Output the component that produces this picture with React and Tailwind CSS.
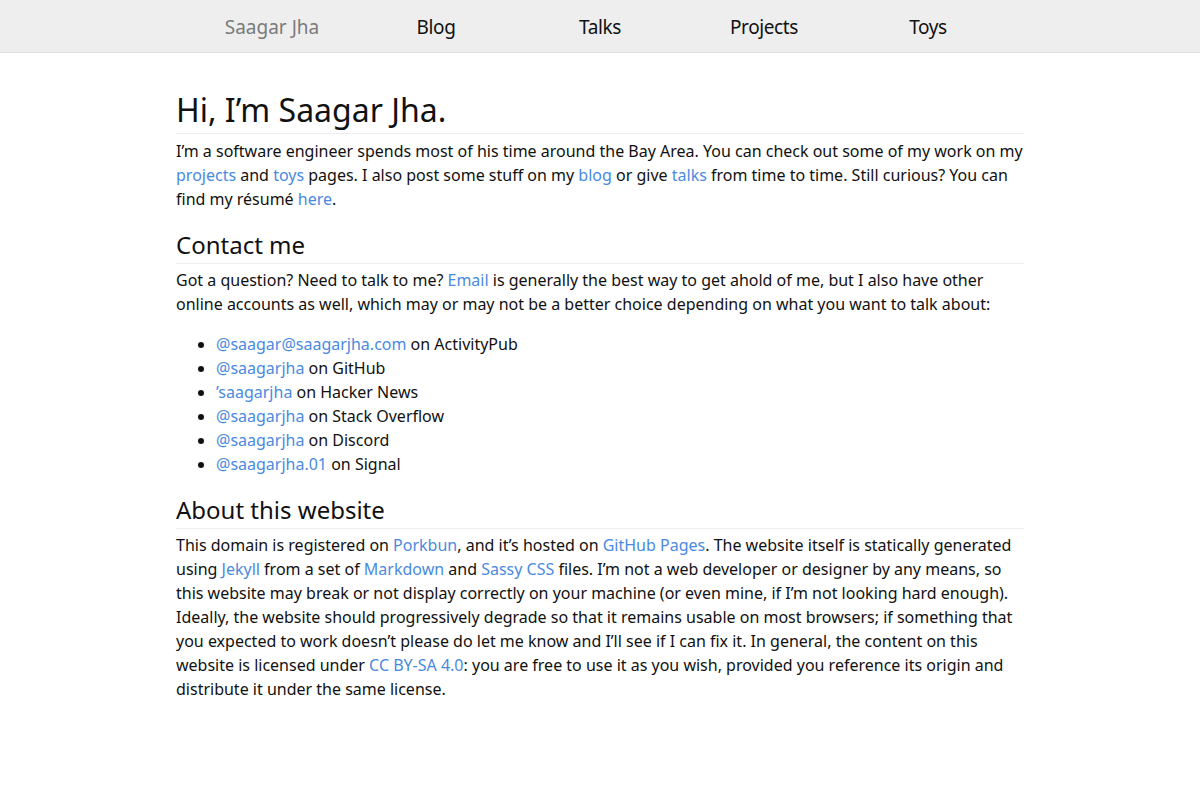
const navItems = [
  { label: "Saagar Jha", home: true },
  { label: "Blog" },
  { label: "Talks" },
  { label: "Projects" },
  { label: "Toys" },
];

const contacts = [
  { handle: "@saagar@saagarjha.com", site: "ActivityPub" },
  { handle: "@saagarjha", site: "GitHub" },
  { handle: "\u2019saagarjha", site: "Hacker News" },
  { handle: "@saagarjha", site: "Stack Overflow" },
  { handle: "@saagarjha", site: "Discord" },
  { handle: "@saagarjha.01", site: "Signal" },
];

const A = ({ children }) => (
  <a href="#" className="text-[#4a8ae0]">
    {children}
  </a>
);

export default function App() {
  return (
    <div className="min-h-screen bg-white text-[#111] font-['Noto_Sans',sans-serif]">
      {/* Top navigation */}
      <nav className="h-[53px] bg-[#eeeeee] border-b border-[#e2e2e2]">
        <ul className="mx-auto grid h-full w-[820px] grid-cols-5 items-center pt-[2px] text-[19px]">
          {navItems.map((item) => (
            <li
              key={item.label}
              className={`text-center ${
                item.home ? "text-[#7a7a7a]" : "text-[#111] tracking-[-0.02em]"
              }`}
            >
              {item.label}
            </li>
          ))}
        </ul>
      </nav>

      <main className="mx-auto w-[848px] pt-[38px] text-[16px] leading-[24px]">
        <h1 className="border-b border-[#eeeeee] pb-[4px] text-[32px] leading-[38px]">
          Hi, I’m Saagar Jha.
        </h1>
        <p className="mt-[5px]">
          I’m a software engineer spends most of his time around the Bay Area. You can check
          out some of my work on my <A>projects</A> and <A>toys</A> pages. I also post some
          stuff on my <A>blog</A> or give <A>talks</A> from time to time. Still curious? You
          can find my résumé <A>here</A>.
        </p>

        <h2 className="mt-[19px] border-b border-[#eeeeee] pb-[4px] text-[24px] leading-[29px]">
          Contact me
        </h2>
        <p className="mt-[4px]">
          Got a question? Need to talk to me? <A>Email</A> is generally the best way to get
          ahold of me, but I also have other online accounts as well, which may or may not be
          a better choice depending on what you want to talk about:
        </p>
        <ul className="mt-[16px] list-disc pl-[40px]">
          {contacts.map((c) => (
            <li key={c.site}>
              <A>{c.handle}</A> on {c.site}
            </li>
          ))}
        </ul>

        <h2 className="mt-[19px] border-b border-[#eeeeee] pb-[4px] text-[24px] leading-[29px]">
          About this website
        </h2>
        <p className="mt-[4px]">
          This domain is registered on <A>Porkbun</A>, and it’s hosted on <A>GitHub Pages</A>.
          The website itself is statically generated using <A>Jekyll</A> from a set of{" "}
          <A>Markdown</A> and <A>Sassy CSS</A> files. I’m not a web developer or designer by
          any means, so this website may break or not display correctly on your machine (or
          even mine, if I’m not looking hard enough). Ideally, the website should
          progressively degrade so that it remains usable on most browsers; if something that
          you expected to work doesn’t please do let me know and I’ll see if I can fix it. In
          general, the content on this website is licensed under <A>CC BY-SA 4.0</A>: you are
          free to use it as you wish, provided you reference its origin and distribute it
          under the same license.
        </p>
      </main>
    </div>
  );
}
